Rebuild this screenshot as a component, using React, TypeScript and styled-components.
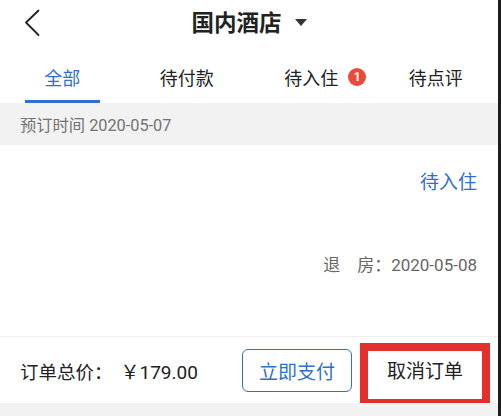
import React from "react";
import styled, { createGlobalStyle } from "styled-components";

const GlobalStyle = createGlobalStyle`
  html, body { margin: 0; padding: 0; background: #fff; }
  body { font-family: Roboto, "Noto Sans CJK SC", "Noto Sans", sans-serif; }
  * { box-sizing: border-box; }
`;

const BLUE = "#2f6fd1";

const Page = styled.div`
  width: 501px;
  height: 416px;
  display: flex;
  background: #fff;
  overflow: hidden;
`;

const Main = styled.div`
  flex: 1;
  display: flex;
  flex-direction: column;
  min-width: 0;
`;

const EdgeStrip = styled.div`
  width: 3px;
  background: #1c1c1c;
`;

const Header = styled.header`
  height: 45px;
  display: grid;
  grid-template-columns: 1fr auto 1fr;
  align-items: center;
`;

const BackButton = styled.button`
  justify-self: start;
  margin-left: 20px;
  width: 24px;
  height: 30px;
  padding: 0;
  border: none;
  background: transparent;
  display: flex;
  align-items: center;
  justify-content: center;
`;

const Title = styled.h1`
  margin: 0;
  display: flex;
  align-items: center;
  font-size: 22.5px;
  font-weight: 700;
  color: #222;
  line-height: 30px;
`;

const Caret = styled.span`
  margin-left: 13px;
  width: 0;
  height: 0;
  border-left: 6px solid transparent;
  border-right: 6px solid transparent;
  border-top: 7px solid #333;
`;

const Tabs = styled.nav`
  height: 58px;
  display: grid;
  grid-template-columns: repeat(4, 1fr);
`;

const Tab = styled.div`
  display: flex;
  justify-content: center;
  padding-top: 9px;
`;

const TabInner = styled.div<{ $active?: boolean }>`
  width: 75px;
  display: flex;
  align-items: center;
  justify-content: center;
  border-bottom: 3px solid ${(p) => (p.$active ? BLUE : "transparent")};
  font-size: 18px;
  color: ${(p) => (p.$active ? BLUE : "#222")};
`;

const TabLabel = styled.span`
  position: relative;
  white-space: nowrap;
`;

const Badge = styled.span`
  position: absolute;
  left: calc(100% + 10px);
  top: 50%;
  transform: translateY(-50%);
  width: 18px;
  height: 18px;
  border-radius: 50%;
  background: #ea4a3a;
  color: #fff;
  font-size: 12px;
  font-weight: 700;
  display: flex;
  align-items: center;
  justify-content: center;
  line-height: 1;
`;

const DateBar = styled.div`
  height: 42px;
  background: #f2f2f2;
  display: flex;
  align-items: center;
  padding-left: 20px;
  font-size: 16.3px;
  color: #737373;
`;

const Card = styled.section`
  height: 191px;
  display: flex;
  flex-direction: column;
  align-items: flex-end;
  padding: 24px 21px 0 0;
`;

const Status = styled.div`
  font-size: 19px;
  line-height: 28px;
  color: ${BLUE};
`;

const Checkout = styled.div`
  margin-top: 56px;
  font-size: 17px;
  line-height: 24px;
  color: #666;
  white-space: pre;
`;

const Footer = styled.footer`
  height: 67px;
  border-top: 1px solid #efefef;
  display: flex;
  align-items: center;
  padding-left: 20px;
`;

const Price = styled.div`
  font-size: 18.5px;
  color: #222;
  white-space: pre;
`;

const Amount = styled.span`
  margin-left: 8px;
  font-size: 19px;
`;

const PayButton = styled.button`
  margin-left: auto;
  width: 110px;
  height: 43px;
  border: 1.5px solid ${BLUE};
  border-radius: 6px;
  background: #fff;
  color: ${BLUE};
  font-family: inherit;
  font-size: 19px;
  padding: 0;
`;

const CancelBox = styled.button`
  margin: 0 8px 0 8px;
  align-self: flex-end;
  margin-bottom: -1px;
  width: 130px;
  height: 61px;
  border: 8px solid #e3302d;
  border-bottom-width: 5px;
  background: #fff;
  color: #222;
  font-family: inherit;
  font-size: 19px;
  padding: 0 0 12px 0;
`;

const BottomFill = styled.div`
  flex: 1;
  background: #f2f2f2;
`;

export default function App() {
  return (
    <>
      <GlobalStyle />
      <Page>
        <Main>
          <Header>
            <BackButton aria-label="返回">
              <svg width="16" height="28" viewBox="0 0 16 28">
                <path d="M14.5 1.5 L2 13.5 L14.5 26" fill="none" stroke="#222" strokeWidth="1.8" strokeLinecap="round" strokeLinejoin="round" />
              </svg>
            </BackButton>
            <Title>
              国内酒店
              <Caret />
            </Title>
            <span />
          </Header>
          <Tabs>
            <Tab>
              <TabInner $active>
                <TabLabel>全部</TabLabel>
              </TabInner>
            </Tab>
            <Tab>
              <TabInner>
                <TabLabel>待付款</TabLabel>
              </TabInner>
            </Tab>
            <Tab>
              <TabInner>
                <TabLabel>
                  待入住
                  <Badge>1</Badge>
                </TabLabel>
              </TabInner>
            </Tab>
            <Tab>
              <TabInner>
                <TabLabel>待点评</TabLabel>
              </TabInner>
            </Tab>
          </Tabs>
          <DateBar>预订时间 2020-05-07</DateBar>
          <Card>
            <Status>待入住</Status>
            <Checkout>退　房：2020-05-08</Checkout>
          </Card>
          <Footer>
            <Price>
              订单总价：<Amount>￥179.00</Amount>
            </Price>
            <PayButton>立即支付</PayButton>
            <CancelBox>取消订单</CancelBox>
          </Footer>
          <BottomFill />
        </Main>
        <EdgeStrip />
      </Page>
    </>
  );
}
